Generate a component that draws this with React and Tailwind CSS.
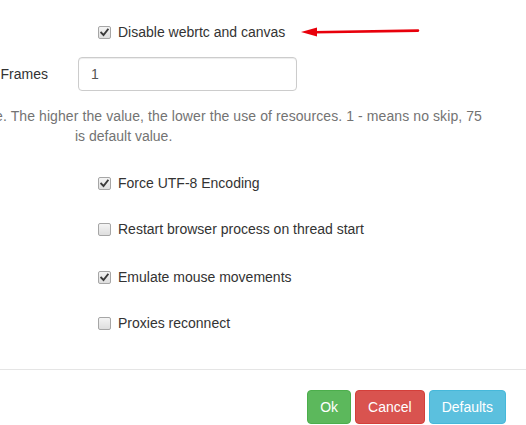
import React from "react";

function Box({ checked }) {
  return (
    <span className="inline-flex items-center justify-center w-[13px] h-[13px] rounded-[2px] border border-[#a6a6a6] bg-gradient-to-b from-[#f4f4f4] to-[#dedede] shrink-0">
      {checked && (
        <svg width="9" height="9" viewBox="0 0 9 9">
          <path d="M1.2 4.6 L3.5 7 L7.8 1.6" fill="none" stroke="#3a3a3a" strokeWidth="1.9" strokeLinecap="square" />
        </svg>
      )}
    </span>
  );
}

function Check({ checked, label, className = "" }) {
  return (
    <div className={"flex items-center h-5 pl-[98px] " + className}>
      <Box checked={checked} />
      <span className="ml-[7px] text-[#333]">{label}</span>
    </div>
  );
}

function Btn({ children, color }) {
  return (
    <button className={"h-[34px] px-3 rounded-[4px] border text-white text-[14px] leading-5 " + color}>
      {children}
    </button>
  );
}

export default function App() {
  return (
    <div
      className="relative w-[526px] h-[425px] overflow-hidden bg-white text-[14px] leading-5 text-[#333]"
      style={{ fontFamily: '"Liberation Sans", Arial, sans-serif' }}
    >
      <div className="flex flex-col pt-[22px]">
        <Check checked label="Disable webrtc and canvas" />
        <div className="flex items-center mt-[15px] h-[34px]">
          <div className="w-[48px] flex justify-end">
            <span className="whitespace-nowrap">Skip Frames</span>
          </div>
          <div className="ml-[30px] w-[219px] h-[34px] rounded-[4px] border border-[#ccc] shadow-[inset_0_1px_1px_rgba(0,0,0,0.075)] px-3 flex items-center text-[#555]">
            1
          </div>
        </div>
        <div className="mt-[15px] text-[#737373]">
          <div className="w-[482px] flex justify-end">
            <span className="whitespace-nowrap tracking-[0.09px]">
              Number of frames to skip while rendering the page. The higher the value, the lower the use of resources. 1 - means no skip, 75
            </span>
          </div>
          <div className="pl-[75px]">is default value.</div>
        </div>
        <Check checked label="Force UTF-8 Encoding" className="mt-[27px]" />
        <Check label="Restart browser process on thread start" className="mt-[26px]" />
        <Check checked label="Emulate mouse movements" className="mt-[28px]" />
        <Check label="Proxies reconnect" className="mt-[26px]" />
        <div className="mt-[36px] h-px bg-[#e5e5e5]" />
        <div className="flex justify-end gap-[4px] pr-[20px] mt-[20px]">
          <Btn color="bg-[#5cb85c] border-[#4cae4c]">Ok</Btn>
          <Btn color="bg-[#d9534f] border-[#d43f3a]">Cancel</Btn>
          <Btn color="bg-[#5bc0de] border-[#46b8da]">Defaults</Btn>
        </div>
      </div>
      <svg className="absolute left-0 top-0 pointer-events-none" width="526" height="60">
        <line x1="314" y1="32.3" x2="418" y2="30.6" stroke="#e8000b" strokeWidth="2.6" strokeLinecap="round" />
        <polygon points="301,32 317,27.6 317,36.4" fill="#e8000b" />
      </svg>
    </div>
  );
}
